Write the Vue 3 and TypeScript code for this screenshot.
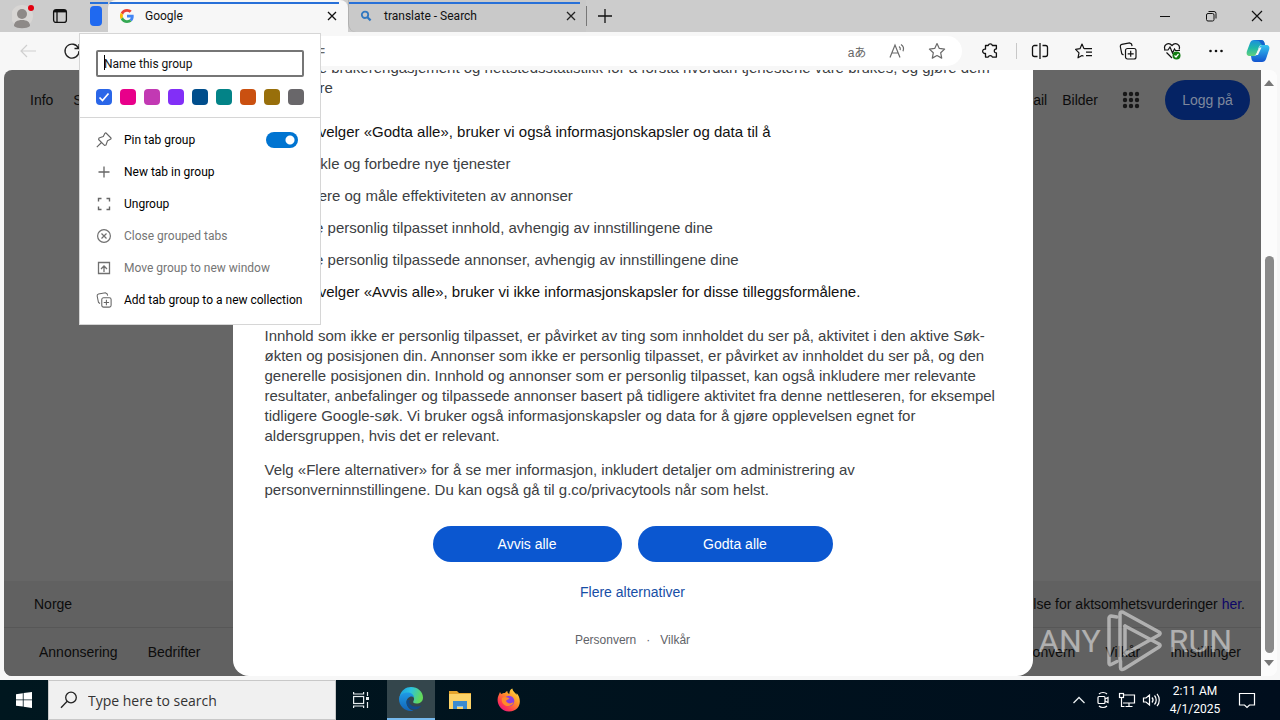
<script setup lang="ts">
import { ref } from 'vue'

const groupName = ref('')
const pinned = ref(true)
const selectedColor = ref('Blue')
const search = ref('')
const address = ref('')

const colors: { name: string; value: string }[] = [
  { name: 'Blue', value: '#2a66e8' },
  { name: 'Pink', value: '#e8008a' },
  { name: 'Orchid', value: '#c239b3' },
  { name: 'Purple', value: '#822ff7' },
  { name: 'Navy', value: '#004e8c' },
  { name: 'Teal', value: '#038387' },
  { name: 'Orange', value: '#ca5010' },
  { name: 'Gold', value: '#986f0b' },
  { name: 'Grey', value: '#69676a' },
]
</script>

<template>
  <div class="desktop">
    <div class="browser">
      <header class="tabstrip">
        <div class="strip-left">
          <button class="icon-btn" aria-label="Profile">
            <svg width="24" height="28" viewBox="0 0 24 28">
              <circle cx="10" cy="14" r="11" fill="#d8d6d4" />
              <circle cx="10" cy="12" r="5" fill="#8d8987" />
              <path d="M2 24c0-4 3-6 8-6s8 2 8 6c-3 3-13 3-16 0z" fill="#8d8987" />
              <circle cx="19" cy="6" r="3" fill="#e3000f" />
            </svg>
          </button>
          <button class="icon-btn" aria-label="Tab actions menu">
            <svg width="16" height="16" viewBox="0 0 16 16" fill="none" stroke="#111" stroke-width="1.3">
              <rect x="1.6" y="1.6" width="12.8" height="12.8" rx="2.5" />
              <path d="M2 3.2h12" stroke-width="2.4" />
              <path d="M5 4v10" />
            </svg>
          </button>
          <button class="group-chip" aria-label="Tab group"></button>
        </div>
        <div class="tab active">
          <svg width="14" height="14" viewBox="0 0 48 48">
            <path fill="#EA4335" d="M24 9.5c3.5 0 6.700 1.200 9.200 3.600l6.900-6.900C35.900 2.400 30.500 0 24 0 14.600 0 6.500 5.400 2.600 13.200l8 6.200C12.400 13.700 17.700 9.500 24 9.500z" />
            <path fill="#4285F4" d="M47 24.500c0-1.600-.2-3.100-.4-4.500H24v9h12.900c-.6 3-2.200 5.500-4.800 7.200l7.700 6C44.400 38 47 31.800 47 24.500z" />
            <path fill="#FBBC05" d="M10.500 28.600A14.500 14.500 0 0 1 10.500 19.400l-8-6.200a24 24 0 0 0 0 21.600z" />
            <path fill="#34A853" d="M24 48c6.500 0 11.900-2.100 15.900-5.800l-7.700-6c-2.200 1.500-4.900 2.300-8.200 2.300-6.300 0-11.600-4.200-13.500-9.900l-8 6.200C6.500 42.600 14.600 48 24 48z" />
          </svg>
          <span class="tab-title">Google</span>
          <button class="close" aria-label="Close tab">
            <svg width="10" height="10" viewBox="0 0 10 10" stroke="#111" stroke-width="1.3"><path d="M1 1l8 8M9 1l-8 8" /></svg>
          </button>
        </div>
        <div class="tab">
          <svg width="14" height="14" viewBox="0 0 14 14" fill="none" stroke="#3278c0" stroke-width="1.800">
            <circle cx="6" cy="5.800" r="3.200" /><path d="M8.400 8.200l3.200 3.200" stroke-width="2.200" />
          </svg>
          <span class="tab-title">translate - Search</span>
          <button class="close" aria-label="Close tab">
            <svg width="10" height="10" viewBox="0 0 10 10" stroke="#222" stroke-width="1.3"><path d="M1 1l8 8M9 1l-8 8" /></svg>
          </button>
        </div>
        <button class="new-tab" aria-label="New tab">
          <svg width="14" height="14" viewBox="0 0 14 14" stroke="#111" stroke-width="1.3"><path d="M7 0v14M0 7h14" /></svg>
        </button>
        <div class="window-controls">
          <button aria-label="Minimize"><svg width="12" height="12" viewBox="0 0 12 12" stroke="#111"><path d="M1 6.500h10" /></svg></button>
          <button aria-label="Restore">
            <svg width="12" height="12" viewBox="0 0 12 12" fill="none" stroke="#111"><rect x="1.500" y="3.500" width="7.500" height="7.500" rx="1.500" /><path d="M3.500 1.500h5.500a2 2 0 0 1 2 2v5" /></svg>
          </button>
          <button aria-label="Close"><svg width="12" height="12" viewBox="0 0 12 12" stroke="#111" stroke-width="1.200"><path d="M1 1l10 10M11 1L1 11" /></svg></button>
        </div>
      </header>

      <nav class="toolbar">
        <button class="tool" aria-label="Back">
          <svg width="18" height="18" viewBox="0 0 18 18" fill="none" stroke="#cfcfcf" stroke-width="1.200"><path d="M17 9H2M8 3L2 9l6 6" /></svg>
        </button>
        <button class="tool" aria-label="Refresh">
          <svg width="18" height="18" viewBox="0 0 18 18" fill="none" stroke="#222" stroke-width="1.300"><path d="M15.500 6.500A7 7 0 1 0 16 9M16 2v4.500h-4.500" /></svg>
        </button>
        <div class="address">
          <input v-model="address" aria-label="Address" />
          <span class="url-end">=</span>
          <button class="lang" aria-label="Translate">aあ</button>
          <button aria-label="Read aloud">
            <svg width="18" height="18" viewBox="0 0 18 18" fill="none" stroke="#6a6a6a" stroke-width="1.200"><path d="M2 15.500L7 3l5 12.500M3.800 11h6.400M11 4.500c1.200.8 1.600 2.200 1.200 3.600M13 2.500c2.400 1.500 3 4.200 2 6.800" /></svg>
          </button>
          <button aria-label="Add to favorites">
            <svg width="18" height="18" viewBox="0 0 18 18" fill="none" stroke="#6a6a6a" stroke-width="1.200" stroke-linejoin="round"><path d="M9 1.500l2.300 4.900 5.300.7-3.900 3.700 1 5.300L9 13.500l-4.700 2.600 1-5.300L1.400 7.100l5.300-.7z" /></svg>
          </button>
        </div>
        <div class="tools">
          <button class="tool" aria-label="Extensions">
            <svg width="18" height="18" viewBox="0 0 18 18" fill="none" stroke="#111" stroke-width="1.300" stroke-linejoin="round"><path d="M4.500 3.500h2.700a2.200 2.200 0 0 1 4.200 0h4v3.400c-2.800-.2-2.800 4.200 0 4v4.200h-4a2.200 2.200 0 0 0-4.200 0H4.500v-3.700a2.200 2.200 0 1 1 0-4.200z" /></svg>
          </button>
          <span class="divider"></span>
          <button class="tool" aria-label="Split screen">
            <svg width="18" height="18" viewBox="0 0 18 18" fill="none" stroke="#111" stroke-width="1.300"><path d="M6.500 3.500H3.500a2 2 0 0 0-2 2v7a2 2 0 0 0 2 2h3M11.500 3.500h3a2 2 0 0 1 2 2v7a2 2 0 0 1-2 2h-3M9 1v16" /></svg>
          </button>
          <button class="tool" aria-label="Favorites">
            <svg width="18" height="18" viewBox="0 0 18 18" fill="none" stroke="#111" stroke-width="1.200" stroke-linejoin="round"><path d="M9 6.700l-2-4.700-2 4.700-4.400.6L4 10.800l-1 5 4-2.300 1.500.8M9 6.700h8M11 10.200h6M11 13.700h6" /></svg>
          </button>
          <button class="tool" aria-label="Collections">
            <svg width="18" height="18" viewBox="0 0 18 18" fill="none" stroke="#111" stroke-width="1.200"><rect x="6.500" y="6.500" width="10.500" height="10.500" rx="2" /><path d="M11.700 8.800v6M8.700 11.800h6M4.500 13l-1.700-1.200L1.300 4.500a2 2 0 0 1 1.500-2.200l7.700-1.500 2 1.200.6 2.200" /></svg>
          </button>
          <button class="tool" aria-label="Browser essentials">
            <svg width="18" height="18" viewBox="0 0 18 18" fill="none" stroke="#111" stroke-width="1.200"><path d="M2 7.500C0 3 5.500-.5 9 3.500c3.500-4 9-.5 7 4M1 8h4l2-3 2.500 6 2-4 1 1.500h4.500M3.500 10.500L9 16" /><circle cx="13.500" cy="13.500" r="4" fill="#107c10" stroke="none" /><path d="M11.500 13.500l1.500 1.500 2.500-3" stroke="#fff" /></svg>
          </button>
          <button class="tool" aria-label="Settings and more">
            <svg width="18" height="18" viewBox="0 0 18 18" fill="#111"><circle cx="3.500" cy="9" r="1.300" /><circle cx="9" cy="9" r="1.300" /><circle cx="14.500" cy="9" r="1.300" /></svg>
          </button>
          <button class="tool" aria-label="Copilot">
            <svg width="24" height="24" viewBox="0 0 24 24">
              <defs>
                <linearGradient id="cp1" x1="0" y1="0" x2="0" y2="1"><stop offset="0" stop-color="#1c8ee0" /><stop offset=".5" stop-color="#1fb7a8" /><stop offset="1" stop-color="#63d17d" /></linearGradient>
                <linearGradient id="cp2" x1="0" y1="0" x2="0" y2="1"><stop offset="0" stop-color="#35c5ef" /><stop offset="1" stop-color="#1254cf" /></linearGradient>
              </defs>
              <path d="M8 1h7c2 0 3 1 3.500 3l.5 2h-3c-2 0-3 1-3.500 3L11 14c-.5 2-1.500 3-3.500 3H4c-3 0-4-2-3-5L4 4c.7-2 2-3 4-3z" fill="url(#cp1)" />
              <path d="M16 23H9c-2 0-3-1-3.500-3L5 17h3c2 0 3-1 3.500-3L13 9c.5-2 1.500-3 3.500-3H20c3 0 4 2 3 5l-3 9c-.7 2-2 3-4 3z" fill="url(#cp2)" />
              <path d="M8 1h7c2 0 3 1 3.500 3l.5 2h-3L13 2z" fill="#1763cc" />
              <path d="M13.500 8.500h2L12 16h-2.500z" fill="#f7f7f7" />
            </svg>
          </button>
        </div>
      </nav>

      <div class="viewport">
        <div class="page">
          <div class="page-head">
            <a href="#">Info</a><a href="#">Store</a>
            <a href="#" class="push">Gmail</a><a href="#" class="images">Bilder</a>
            <button class="apps" aria-label="Google-apper">
              <svg width="18" height="18" viewBox="0 0 18 18" fill="#181818">
                <circle cx="3" cy="3" r="2.200" /><circle cx="9" cy="3" r="2.200" /><circle cx="15" cy="3" r="2.200" />
                <circle cx="3" cy="9" r="2.200" /><circle cx="9" cy="9" r="2.200" /><circle cx="15" cy="9" r="2.200" />
                <circle cx="3" cy="15" r="2.200" /><circle cx="9" cy="15" r="2.200" /><circle cx="15" cy="15" r="2.200" />
              </svg>
            </button>
            <button class="login">Logg på</button>
          </div>
          <footer class="page-foot">
            <div class="foot-row country"><span>Norge</span><span>Redegjørelse for aktsomhetsvurderinger <a href="#" class="here">her</a>.</span></div>
            <div class="foot-row links">
              <a href="#">Annonsering</a><a href="#">Bedrifter</a>
              <a href="#" class="push">Personvern</a><a href="#">Vilkår</a><a href="#">Innstillinger</a>
            </div>
          </footer>

          <section class="consent" role="dialog" aria-label="Før du fortsetter til Google">
            <ul class="first">
              <li>Måle brukerengasjement og nettstedsstatistikk for å forstå hvordan tjenestene våre brukes, og gjøre dem<br />bedre</li>
            </ul>
            <p class="strong lead">Hvis du velger «Godta alle», bruker vi også informasjonskapsler og data til å</p>
            <ul>
              <li>Utvikle og forbedre nye tjenester</li>
              <li>Levere og måle effektiviteten av annonser</li>
              <li>Vise personlig tilpasset innhold, avhengig av innstillingene dine</li>
              <li>Vise personlig tilpassede annonser, avhengig av innstillingene dine</li>
            </ul>
            <p class="strong">Hvis du velger «Avvis alle», bruker vi ikke informasjonskapsler for disse tilleggsformålene.</p>
            <p class="long">
              Innhold som ikke er personlig tilpasset, er påvirket av ting som innholdet du ser på, aktivitet i den aktive Søk-<br />økten og posisjonen din. Annonser som ikke er personlig tilpasset, er påvirket av innholdet du ser på, og den<br />generelle posisjonen din. Innhold og annonser som er personlig tilpasset, kan også inkludere mer relevante<br />resultater, anbefalinger og tilpassede annonser basert på tidligere aktivitet fra denne nettleseren, for eksempel<br />tidligere Google-søk. Vi bruker også informasjonskapsler og data for å gjøre opplevelsen egnet for<br />aldersgruppen, hvis det er relevant.
            </p>
            <p class="more-text">
              Velg «Flere alternativer» for å se mer informasjon, inkludert detaljer om administrering av<br />personverninnstillingene. Du kan også gå til g.co/privacytools når som helst.
            </p>
            <div class="actions"><button>Avvis alle</button><button>Godta alle</button></div>
            <a href="#" class="options">Flere alternativer</a>
            <div class="legal"><a href="#">Personvern</a><span>·</span><a href="#">Vilkår</a></div>
          </section>

          <div class="watermark">
            <span>ANY</span>
            <svg width="56" height="62" viewBox="0 0 56 62" fill="none" stroke="#fff" stroke-width="3.500" stroke-linejoin="round" stroke-linecap="round">
              <path d="M10 7l-6-1c-1 0-2 1-2 2v45c0 1.500 1 2 2 1.500l6-3" />
              <path d="M13 51V4c0-2 1.500-2.500 3-1.800L52 22c1.500 1 1.500 2 0 3L18 44" />
              <path d="M18 16l34 18c1.500 1 1.500 2 0 3L17 59c-2 1-3.500.5-3.500-1.500V51" />
              <path d="M18 16v28" />
            </svg>
            <span>RUN</span>
          </div>
        </div>
        <div class="scrollbar">
          <svg width="10" height="6" viewBox="0 0 10 6"><path d="M5 0l5 6H0z" fill="#777" /></svg>
          <div class="track"><div class="thumb"></div></div>
          <svg width="10" height="6" viewBox="0 0 10 6"><path d="M5 6l5-6H0z" fill="#777" /></svg>
        </div>
      </div>

      <div class="menu">
        <div class="menu-top">
          <input v-model="groupName" class="name-input" type="text" placeholder="Name this group" aria-label="Name this group" />
          <span class="caret"></span>
          <div class="swatches">
            <label v-for="c in colors" :key="c.name" class="swatch" :style="{ background: c.value }">
              <input v-model="selectedColor" type="radio" name="color" :value="c.name" :aria-label="c.name" />
              <svg v-if="selectedColor === c.name" width="12" height="12" viewBox="0 0 12 12" fill="none" stroke="#fff" stroke-width="1.700"><path d="M1.500 6.500l3 3 6-7" /></svg>
            </label>
          </div>
        </div>
        <div class="menu-items">
          <label class="item">
            <svg width="16" height="16" viewBox="0 0 16 16" fill="none" stroke="#666" stroke-width="1.100" stroke-linejoin="round"><path d="M10 1l5 5c.3.600 0 1-.6 1.200L11.500 8.700 10 13l-1.500.4L2.600 7.500 3 6l4.300-1.500L8.800 1.600C9 1 9.500.7 10 1zM5.500 10.500L.8 15.200" /></svg>
            <span>Pin tab group</span>
            <input v-model="pinned" class="toggle" type="checkbox" />
          </label>
          <button class="item">
            <svg width="16" height="16" viewBox="0 0 16 16" stroke="#666" stroke-width="1.300"><path d="M8 2.500v11M2.500 8h11" /></svg>
            <span>New tab in group</span>
          </button>
          <button class="item">
            <svg width="16" height="16" viewBox="0 0 16 16" fill="none" stroke="#666" stroke-width="1.400"><path d="M2.500 5.500v-3h3M10.500 2.500h3v3M13.500 10.500v3h-3M5.500 13.500h-3v-3" /></svg>
            <span>Ungroup</span>
          </button>
          <button class="item" disabled>
            <svg width="16" height="16" viewBox="0 0 16 16" fill="none" stroke="#707070" stroke-width="1.200"><circle cx="8" cy="8" r="6.400" /><path d="M5.500 5.500l5 5M10.500 5.500l-5 5" /></svg>
            <span>Close grouped tabs</span>
          </button>
          <button class="item" disabled>
            <svg width="16" height="16" viewBox="0 0 16 16" fill="none" stroke="#707070" stroke-width="1.300"><path d="M5 13.500H2.500v-11h11v11H11M5 13.500h6M8 12V6M5 9l3-3 3 3" /></svg>
            <span>Move group to new window</span>
          </button>
          <button class="item">
            <svg width="16" height="16" viewBox="0 0 18 18" fill="none" stroke="#666" stroke-width="1.200"><rect x="6.500" y="6.500" width="10.500" height="10.500" rx="2" /><path d="M11.700 8.800v6M8.700 11.800h6M4.500 13l-1.700-1.200L1.300 4.500a2 2 0 0 1 1.500-2.200l7.700-1.500 2 1.200.6 2.200" /></svg>
            <span>Add tab group to a new collection</span>
          </button>
        </div>
      </div>
    </div>

    <footer class="taskbar">
      <button class="start" aria-label="Start">
        <svg width="16" height="16" viewBox="0 0 16 16" fill="#fff"><path d="M0 2.200L6.800 1.200v6.300H0zM7.600 1.100L16 0v7.500H7.600zM0 8.300h6.800v6.300L0 13.700zM7.600 8.300H16V16l-8.400-1.200z" /></svg>
      </button>
      <label class="search">
        <svg width="18" height="18" viewBox="0 0 18 18" fill="none" stroke="#222" stroke-width="1.300"><circle cx="11" cy="6.500" r="5.300" /><path d="M7.200 10.300L1 16.800" /></svg>
        <input v-model="search" type="text" placeholder="Type here to search" aria-label="Type here to search" />
      </label>
      <button class="task" aria-label="Task view">
        <svg width="18" height="18" viewBox="0 0 18 18" fill="none" stroke="#e8eef0" stroke-width="1.200"><rect x="1.600" y="5.500" width="10" height="7" /><path d="M1.600 1v2h10V1M1.600 17v-2h10v2M15.500 1v4M15.500 11v6" /><path d="M15.500 6v3" stroke-width="3" /></svg>
      </button>
      <button class="task current" aria-label="Microsoft Edge">
        <svg width="26" height="26" viewBox="0 0 26 26">
          <defs>
            <linearGradient id="eg1" x1="0" y1="0" x2="1" y2="0.300"><stop offset="0" stop-color="#1a9be0" /><stop offset=".5" stop-color="#2cc3df" /><stop offset="1" stop-color="#62d95b" /></linearGradient>
            <linearGradient id="eg2" x1="0" y1="0" x2="0" y2="1"><stop offset="0" stop-color="#1f9be6" /><stop offset="1" stop-color="#1263b8" /></linearGradient>
          </defs>
          <path d="M1.500 11C3 4 8 1 13 1c7 0 12 5 12 10.500 0 4-3 6-6.500 6-3 0-4-1-3-2.500 2-3-1-6.500-5-6.500-4 0-7 1-9 2.500z" fill="url(#eg1)" />
          <path d="M1 13c0-4 4-6.500 8.500-6.500 3.500 0 6 2 6.500 4.500-4-2-8 1.500-7.500 6 .4 4 3.500 7 7 7.700C8 26.500 1 20.500 1 13z" fill="url(#eg2)" />
          <path d="M9 14c-1.500 4 1.500 9 7 9.500 3 .2 6-1.500 7.500-4-3 1.300-8 1.500-10.500-.5-1.700-1.400-2-3-1-5z" fill="#114a8b" />
        </svg>
      </button>
      <button class="task" aria-label="File Explorer">
        <svg width="24" height="22" viewBox="0 0 24 22"><path d="M1 2h8l2 2h12v16H1z" fill="#e5a52c" /><path d="M1 5h22v15H1z" fill="#fcd368" /><path d="M5 12h14v8h-4v-3H9v3H5z" fill="#3b8bd0" /><path d="M9 17h6v1H9z" fill="#8cc4ef" /></svg>
      </button>
      <button class="task" aria-label="Firefox">
        <svg width="24" height="24" viewBox="0 0 24 24">
          <defs><linearGradient id="ff" x1="1" y1="0" x2="0.200" y2="1"><stop offset="0" stop-color="#fff04a" /><stop offset=".45" stop-color="#ff9328" /><stop offset=".8" stop-color="#ff3750" /><stop offset="1" stop-color="#e0138c" /></linearGradient></defs>
          <path d="M3 4c.3 1 .8 1.500 1.500 2C6 5 7 4.800 8 5c.5-1 1.300-1.700 2.300-2 0 1.500.8 2.500 2 3 0-2.500 1-4.700 3-5.500.5 3 3 4 4.200 6.200.2-.7.200-1 0-1.700C25 10 24.500 23.500 12 23.500 3 23.500-1.500 14 1.500 7.500c.5-1 1-2.500 1.500-3.500z" fill="url(#ff)" />
          <circle cx="12" cy="13" r="5.300" fill="#8a3fe0" />
          <path d="M5 10c3-2 5.500-.8 7.500.5-1.500 1.200-3 1-3.500 2.500 1.500 3 5 3 7.500 1-1 5-8.500 5.500-11 1-.8-1.600-1-3.500-.5-5z" fill="#ff8a2a" />
        </svg>
      </button>
      <div class="tray">
        <button aria-label="Show hidden icons"><svg width="18" height="18" viewBox="0 0 18 18" fill="none" stroke="#e8eef0" stroke-width="1.300"><path d="M3.500 12L9 6.500l5.500 5.500" /></svg></button>
        <button aria-label="Meet now"><svg width="18" height="18" viewBox="0 0 18 18" fill="none" stroke="#fff" stroke-width="1.200"><rect x="4" y="5.500" width="7" height="7" rx="1" /><path d="M11 8l3-1.500v5L11 10M5 3c2-2 6-2 8 0M5 15c2 2 6 2 8 0" /></svg></button>
        <button aria-label="Network"><svg width="18" height="18" viewBox="0 0 18 18" fill="none" stroke="#fff" stroke-width="1.200"><path d="M5 4h11.500v8H5M11 12v3.500M7.500 15.500h7M3.500 6.500V12" /><rect x="1.500" y="2.500" width="4" height="4" /><path d="M3.500 12v3.500h3" /></svg></button>
        <button aria-label="Volume"><svg width="18" height="18" viewBox="0 0 18 18" fill="none" stroke="#fff" stroke-width="1.200"><path d="M1.500 7v4H4l3.500 3V4L4 7zM10 6.500c1.300 1.500 1.300 3.500 0 5M12.500 4.500c2.300 2.500 2.300 6.500 0 9M15 2.800c3 3.500 3 9 0 12.400" /></svg></button>
        <time class="clock">2:11 AM<br />4/1/2025</time>
        <button class="notif" aria-label="Notifications"><svg width="18" height="18" viewBox="0 0 18 18" fill="none" stroke="#fff" stroke-width="1.200"><path d="M1.500 2.500h15v11.500h-5L9 16.500 6.500 14h-5z" /></svg></button>
      </div>
    </footer>
  </div>
</template>

<style>
body {
  margin: 0;
}
</style>

<style scoped>
* {
  box-sizing: border-box;
}
.desktop {
  display: flex;
  flex-direction: column;
  height: 100vh;
  overflow: hidden;
  font-family: 'Liberation Sans', Arial, sans-serif;
  font-size: 14px;
  color: #202124;
}
button {
  font: inherit;
  color: inherit;
  border: 0;
  background: none;
  padding: 0;
  display: flex;
  align-items: center;
  justify-content: center;
}
a {
  color: inherit;
  text-decoration: none;
}
input {
  font: inherit;
  margin: 0;
}
svg {
  flex: none;
  display: block;
}
.browser {
  position: relative;
  flex: 1;
  min-height: 0;
  display: flex;
  flex-direction: column;
  background: #f7f7f7;
}
.tabstrip {
  height: 32px;
  flex: none;
  display: flex;
  background: #cccccc;
  font-family: Roboto, 'Open Sans', sans-serif;
  font-size: 12px;
  color: #111;
}
.strip-left {
  display: flex;
  align-items: center;
  width: 108px;
  padding-left: 12px;
  background: linear-gradient(#2770d8, #2770d8) 90px 2px / 18px 2px no-repeat;
}
.icon-btn {
  width: 24px;
  margin-right: 12px;
}
.group-chip {
  width: 12px;
  height: 20px;
  border-radius: 4px;
  background: #1f69f0;
  margin-left: 6px;
}
.icon-btn,
.group-chip {
  flex: none;
}
.tab {
  display: flex;
  align-items: center;
  width: 238px;
  padding: 0 5px 0 10px;
  background: linear-gradient(#2770d8, #2770d8) 0 2px / calc(100% - 6px) 2px no-repeat #c9c9c9;
  border-left: 1px solid #b0b0b0;
  border-radius: 0 0 0 8px;
}
.tab.active {
  width: 240px;
  background: linear-gradient(#2770d8, #2770d8) 0 2px / calc(100% - 9px) 2px no-repeat #f7f7f7;
  border-left: 0;
  border-radius: 8px 8px 0 0;
  padding: 0 6px 0 12px;
}
.tab-title {
  flex: 1;
  margin-left: 11px;
  white-space: nowrap;
}
.close {
  width: 20px;
  height: 20px;
}
.new-tab {
  width: 36px;
  margin: 6px 0;
  border-left: 1px solid #777;
}
.window-controls {
  display: flex;
  margin-left: auto;
}
.window-controls button {
  width: 46px;
}
.toolbar {
  height: 38px;
  flex: none;
  display: flex;
  align-items: center;
  padding: 0 10px;
}
.tool {
  width: 36px;
  height: 32px;
  margin-right: 8px;
}
.address {
  flex: 1;
  height: 30px;
  display: flex;
  align-items: center;
  gap: 8px;
  padding-right: 9px;
  background: #fff;
  border-radius: 16px;
  color: #666;
}
.address input {
  width: 211px;
  border: 0;
  background: none;
  outline: 0;
}
.address .url-end {
  flex: 1;
}
.address button {
  width: 32px;
  height: 28px;
}
.address .lang {
  font-family: 'Liberation Sans', 'Noto Sans CJK JP', sans-serif;
  font-size: 12px;
}
.tools {
  display: flex;
  align-items: center;
  margin-left: 10px;
  margin-right: -12px;
}
.tools .tool:last-child {
  width: 32px;
}
.tools .divider {
  width: 1px;
  height: 16px;
  background: #c8c8c8;
  margin-right: 5px;
}
.viewport {
  flex: 1;
  min-height: 0;
  display: flex;
  margin: 0 3px 4px 4px;
  border-radius: 8px;
  overflow: hidden;
  background: #fff;
}
.page {
  position: relative;
  flex: 1;
  display: flex;
  flex-direction: column;
  justify-content: space-between;
  background: #666666;
  color: #0c0c0c;
  overflow: hidden;
}
.page-head {
  display: flex;
  align-items: center;
  padding: 10px 11px 10px 26px;
}
.page-head a {
  margin-right: 20px;
}
.push {
  margin-left: auto;
}
.page-head a.push {
  margin-right: 15px;
}
.page-head .images {
  margin-right: 16px;
}
.apps {
  width: 34px;
  margin-right: 17px;
}
.login {
  width: 85px;
  height: 40px;
  border-radius: 20px;
  background: #052364;
  color: #7f889c;
}
.page-foot {
  background: #616161;
}
.foot-row {
  display: flex;
  align-items: center;
  height: 48px;
}
.foot-row.country {
  height: 47px;
  justify-content: space-between;
  padding: 0 16px 0 30px;
  border-bottom: 1px solid #575757;
}
.here {
  color: #0d0666;
}
.foot-row.links {
  gap: 30px;
  padding: 0 20px 0 35px;
}
.consent {
  position: absolute;
  top: 0;
  bottom: 0;
  left: 50%;
  width: 800px;
  max-width: 100%;
  margin-left: -400px;
  padding: 0 32px 26px;
  display: flex;
  flex-direction: column;
  justify-content: flex-end;
  overflow: hidden;
  background: #fff;
  border-radius: 0 0 16px 16px;
  color: #3c4043;
  line-height: 20px;
}
.consent p,
.consent ul {
  margin: 0;
  font-size: 15px;
  white-space: nowrap;
}
.consent ul {
  padding-left: 30px;
}
.consent li {
  margin-bottom: 12px;
}
.consent .first li {
  margin-bottom: 0;
}
.consent .strong {
  color: #111;
}
.consent .lead {
  margin: 24px 0 12px;
}
.consent .long {
  margin-top: 24px;
}
.consent .more-text {
  margin-top: 14px;
}
.actions {
  display: flex;
  justify-content: center;
  gap: 16px;
  margin-top: 26px;
}
.actions button {
  width: 189px;
  height: 36px;
  border-radius: 18px;
  background: #0b57d0;
  color: #fff;
}
.actions button + button {
  width: 195px;
}
.options {
  margin-top: 20px;
  text-align: center;
  color: #174ea6;
}
.legal {
  display: flex;
  justify-content: center;
  gap: 10px;
  margin-top: 28px;
  font-size: 12px;
  color: #5f6368;
}
.watermark {
  position: absolute;
  right: 29px;
  bottom: 4px;
  display: flex;
  align-items: center;
  gap: 6px;
  font-family: Roboto, sans-serif;
  font-size: 32px;
  color: #fff;
  opacity: 0.5;
}
.scrollbar {
  width: 16px;
  display: flex;
  flex-direction: column;
  align-items: center;
  padding: 10px 0;
  background: #fcfcfc;
}
.track {
  flex: 1;
  width: 9px;
  display: flex;
  flex-direction: column;
  justify-content: flex-end;
  margin-bottom: 7px;
}
.thumb {
  height: 70%;
  border-radius: 5px;
  background: #8a8a8a;
}
.menu {
  position: absolute;
  top: 33px;
  left: 79px;
  width: 242px;
  background: #fff;
  border: 1px solid #d6d6d6;
  font-family: Roboto, 'Open Sans', sans-serif;
  font-size: 12px;
  color: #000;
}
.menu-top {
  position: relative;
  padding: 16px 16px 12px;
  border-bottom: 1px solid #d6d6d6;
}
.name-input {
  display: block;
  width: 100%;
  height: 27px;
  padding: 0 6px;
  border: 2px solid #767676;
  border-radius: 2px;
  outline: 0;
}
.name-input::placeholder {
  color: #111;
  opacity: 1;
}
.caret {
  position: absolute;
  left: 24px;
  top: 21px;
  width: 1px;
  height: 15px;
  background: #000;
}
.swatches {
  display: flex;
  justify-content: space-between;
  margin-top: 12px;
}
.swatch {
  width: 16px;
  height: 16px;
  border-radius: 4px;
  display: flex;
  align-items: center;
  justify-content: center;
}
.swatch input {
  appearance: none;
  position: absolute;
}
.menu-items {
  padding: 6px 0 8px;
}
.item {
  width: 100%;
  height: 32px;
  display: flex;
  justify-content: flex-start;
  gap: 12px;
  align-items: center;
  padding: 0 16px;
  white-space: nowrap;
}
.item:disabled {
  color: #757575;
}
.toggle {
  appearance: none;
  width: 32px;
  height: 16px;
  margin-left: auto;
  margin-right: 6px;
  border-radius: 8px;
  background: radial-gradient(circle at 24px 8px, #fff 4px, #0074d1 5px);
}
.taskbar {
  height: 40px;
  flex: none;
  display: flex;
  background: linear-gradient(90deg, #00171f, #000e1d);
  color: #fff;
}
.start {
  width: 48px;
}
.search {
  width: 288px;
  display: flex;
  align-items: center;
  gap: 8px;
  padding: 0 11px;
  background: #f0f0f0;
  border: 1px solid #c8c8c8;
}
.search input {
  flex: 1;
  min-width: 0;
  border: 0;
  background: none;
  font-family: 'Open Sans', 'Noto Sans', sans-serif;
  font-size: 14px;
}
.search input::placeholder {
  color: #333;
  opacity: 1;
}
.task {
  width: 49px;
}
.task.current {
  width: 48px;
  margin-left: 2px;
  background: #34464c;
  border-bottom: 2px solid #76b9ed;
}
.tray {
  margin-left: auto;
  display: flex;
  align-items: center;
  padding-right: 18px;
}
.tray button {
  width: 24px;
  height: 40px;
}
.clock {
  width: 64px;
  text-align: center;
  font-family: Roboto, 'Open Sans', sans-serif;
  font-size: 12px;
  line-height: 18px;
}
.tray .notif {
  width: 30px;
  margin-left: 5px;
}
</style>
